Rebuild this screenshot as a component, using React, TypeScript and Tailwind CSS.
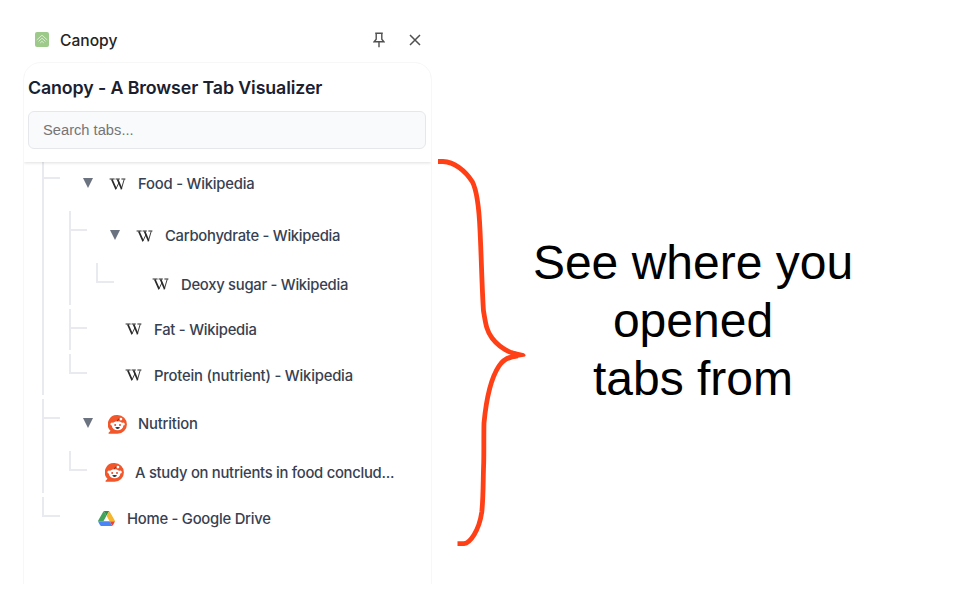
import type { ReactNode } from "react";

type TabNode = {
  label: string;
  icon: ReactNode;
  row: string;
  tracking: string;
  children?: TabNode[];
};

function WikiIcon() {
  return (
    <svg className="shrink-0" width="17" height="13" viewBox="0 0 17 13" fill="none" stroke="#2a2a2a">
      <path d="M.6 1h5M6.6 1h4.2M12.4 1h4" strokeWidth="1" />
      <path d="M2.8 1.3 7 10.8M8.600 1.300l4 9.500" strokeWidth="1.700" />
      <path d="M6.600 11.600 10 4.600M12.200 11.600l3-10.300" strokeWidth=".9" />
    </svg>
  );
}

function RedditIcon() {
  return (
    <svg className="shrink-0" width="19" height="19" viewBox="0 0 19 19">
      <path d="M9.6.1a9.2 9.2 0 1 1 0 18.6H1.2c-.7 0-.9-.6-.4-1.1l1.7-1.8A9.2 9.2 0 0 1 9.6.1Z" fill="#f1572b" />
      <circle cx="4" cy="9" r="1.6" fill="#fff" />
      <circle cx="15.2" cy="9" r="1.600" fill="#fff" />
      <ellipse cx="9.600" cy="10.700" rx="5.700" ry="4.500" fill="#fff" />
      <path d="M9.500 6.200C9.600 4.400 10.500 3.800 12 4" fill="none" stroke="#7a261a" strokeWidth=".9" />
      <circle cx="12.900" cy="4.100" r="1.400" fill="#fff" />
      <circle cx="7.200" cy="9.900" r="1" fill="#e84a27" />
      <circle cx="12" cy="9.900" r="1" fill="#e84a27" />
      <path d="M7.200 12.300q2.400-.6 4.800 0-.6 1.800-2.400 1.800t-2.400-1.800Z" fill="#27343a" />
    </svg>
  );
}

function DriveIcon() {
  return (
    <svg className="shrink-0" width="17" height="15" viewBox="0 0 87.3 78">
      <path d="M43.65 25 29.9 1.2c-1.35.8-2.5 1.9-3.3 3.3l-25.4 44A9.06 9.06 0 0 0 0 53h27.5z" fill="#43a35a" />
      <path d="M73.55 76.8c1.35-.8 2.5-1.9 3.3-3.3l9.25-16c.8-1.4 1.2-2.95 1.2-4.5H59.8z" fill="#ea4335" />
      <path d="M43.65 25 57.4 1.2C56.05.4 54.5 0 52.9 0H34.4c-1.6 0-3.15.45-4.5 1.2z" fill="#2f9149" />
      <path d="M59.8 53H0c0 1.55.4 3.1 1.2 4.5l9.25 16c.8 1.4 1.95 2.5 3.3 3.3 1.35.8 2.9 1.2 4.5 1.2h50.8c1.6 0 3.15-.45 4.5-1.2z" fill="#4a84f5" />
      <path d="m73.4 26.5-12.7-22c-.8-1.4-1.95-2.5-3.3-3.3L43.65 25 59.8 53h27.45c0-1.55-.4-3.1-1.2-4.5z" fill="#f5b52e" />
    </svg>
  );
}

const tabs: TabNode[] = [
  {
    label: "Food - Wikipedia",
    icon: <WikiIcon />,
    tracking: "tracking-[-0.2px]",
    row: "h-[52px] pt-[14px] pl-[14px] gap-[12px]",
    children: [
      {
        label: "Carbohydrate - Wikipedia",
        icon: <WikiIcon />,
        tracking: "tracking-[-0.26px]",
        row: "h-[52px] pt-[14px] pl-[14px] gap-[12px]",
        children: [
          {
            label: "Deoxy sugar - Wikipedia",
            icon: <WikiIcon />,
            tracking: "tracking-[-0.27px]",
            row: "h-[41.5px] pt-[10.5px] pl-[29px] gap-[12px]",
          },
        ],
      },
      {
        label: "Fat - Wikipedia",
        icon: <WikiIcon />,
        tracking: "tracking-[-0.24px]",
        row: "h-[41px] pt-[10px] pl-[29px] gap-[12px]",
      },
      {
        label: "Protein (nutrient) - Wikipedia",
        icon: <WikiIcon />,
        tracking: "tracking-[-0.19px]",
        row: "h-[41px] pt-[11px] pl-[29px] gap-[12px]",
      },
    ],
  },
  {
    label: "Nutrition",
    icon: <RedditIcon />,
    tracking: "tracking-[-0.19px]",
    row: "h-[52px] pt-[14.5px] pl-[14px] gap-[11px]",
    children: [
      {
        label: "A study on nutrients in food conclud...",
        icon: <RedditIcon />,
        tracking: "tracking-[-0.27px]",
        row: "h-[42px] pt-[11px] pl-[9px] gap-[11px]",
      },
    ],
  },
  {
    label: "Home - Google Drive",
    icon: <DriveIcon />,
    tracking: "tracking-[-0.24px]",
    row: "h-[42px] pt-[11px] pl-[29px] gap-[12px]",
  },
];

function Caret() {
  return (
    <svg className="mr-[4px] mb-[2px] shrink-0" width="10" height="12" viewBox="0 0 10 12">
      <path d="M0 1h10L5 11Z" fill="#6b7280" />
    </svg>
  );
}

function Branch({ nodes }: { nodes: TabNode[] }) {
  return (
    <ul className="flex flex-col gap-[4px]">
      {nodes.map((node, i) => (
        <li key={node.label} className="flex">
          <div className="flex w-[18px] shrink-0 flex-col">
            <div className="h-[20px] border-b-2 border-l-2 border-[#e9eaf0]" />
            {i < nodes.length - 1 && <div className="flex-1 border-l-2 border-[#e9eaf0]" />}
          </div>
          <div className="ml-[9px] min-w-0 flex-1">
            <div className={`flex items-start ${node.row}`}>
              <div className="flex h-[22px] items-center gap-[inherit]">
                {node.children && <Caret />}
                {node.icon}
                <span className={`whitespace-nowrap text-[14.8px] leading-[22px] font-[450] text-[#374151] ${node.tracking}`}>
                  {node.label}
                </span>
              </div>
            </div>
            {node.children && <Branch nodes={node.children} />}
          </div>
        </li>
      ))}
    </ul>
  );
}

export default function App() {
  return (
    <main className="flex h-[600px] w-[960px] overflow-hidden bg-white font-['Inter',sans-serif]">
      <aside className="flex w-[432px] shrink-0 flex-col pl-[23px]">
        <div className="flex h-[62px] items-center pt-[17px] pl-[12px]">
          <svg width="14" height="15" viewBox="0 0 14 15">
            <rect width="14" height="15" rx="2" fill="#9dc98a" />
            <path d="M1.7 8 7 3.2 12.3 8M3.5 9.4 7 6.2l3.5 3.2M5.2 11 7 9.3 8.8 11" fill="none" stroke="#d9edcf" strokeWidth="1" />
          </svg>
          <span className="mt-[2px] ml-[11px] text-[15.6px] font-medium text-[#242424]">Canopy</span>
          <svg className="ml-auto" width="12" height="16" viewBox="0 0 12 16" fill="none" stroke="#505050" strokeWidth="1.4">
            <path d="M2.2 1.2h7.6M3.2 1.2v6L1.2 9.7h9.6l-2-2.5v-6M6 9.7v5.6" />
          </svg>
          <svg className="mr-[11px] ml-[24px]" width="12" height="12" viewBox="0 0 12 12" fill="none" stroke="#505050" strokeWidth="1.5">
            <path d="m1 1 10 10M11 1 1 11" />
          </svg>
        </div>
        <section className="flex h-[522px] w-[409px] flex-col overflow-hidden rounded-t-[18px] border border-b-0 border-[#f7f7f7]">
          <header className="z-10 h-[99px] shrink-0 bg-white px-[4px] pt-[11px] shadow-[0_1px_3px_rgba(0,0,0,0.13)]">
            <h1 className="whitespace-nowrap text-[17.8px] leading-[27px] font-semibold tracking-[-0.11px] text-[#1a2030]">
              Canopy - A Browser Tab Visualizer
            </h1>
            <input
              className="mt-[10px] block h-[38px] w-[398px] rounded-[6px] border border-[#e5e7eb] bg-[#f9fafc] px-[14px] font-['Liberation_Sans',sans-serif] text-[14.7px] placeholder:text-[#757575]"
              placeholder="Search tabs..."
            />
          </header>
          <div className="-mt-[3px] pl-[18px]">
            <Branch nodes={tabs} />
          </div>
        </section>
      </aside>
      <svg className="shrink-0" width="98" height="600" viewBox="432 0 98 600" fill="none" stroke="#ff4017" strokeWidth="4.8">
        <path d="M438 161.5H443C454 162 465 170 472.5 182C477 191 479 207 480 230C481.5 260 482 290 483.5 311C485.5 322 486 330 492 338C498 346 507 351.5 516 354.3" />
        <path d="M518 355.8C509 356.5 503.5 359 499 366C491 378 486 402 484 423C483.7 436 484 450 483.7 463C483 480 483.5 495 481.8 512C479 531 470 543 464 543.7H457.5" />
        <path d="M512 350.5 524 353.2Q526.5 355 525 356.6L512 358.8Z" fill="#ff4017" stroke="none" />
      </svg>
      <h2 className="mt-[234px] ml-[-12px] w-[350px] text-center font-['Liberation_Sans',sans-serif] text-[48px] leading-[58px] text-black">
        See where you
        <br />
        opened
        <br />
        tabs from
      </h2>
    </main>
  );
}
